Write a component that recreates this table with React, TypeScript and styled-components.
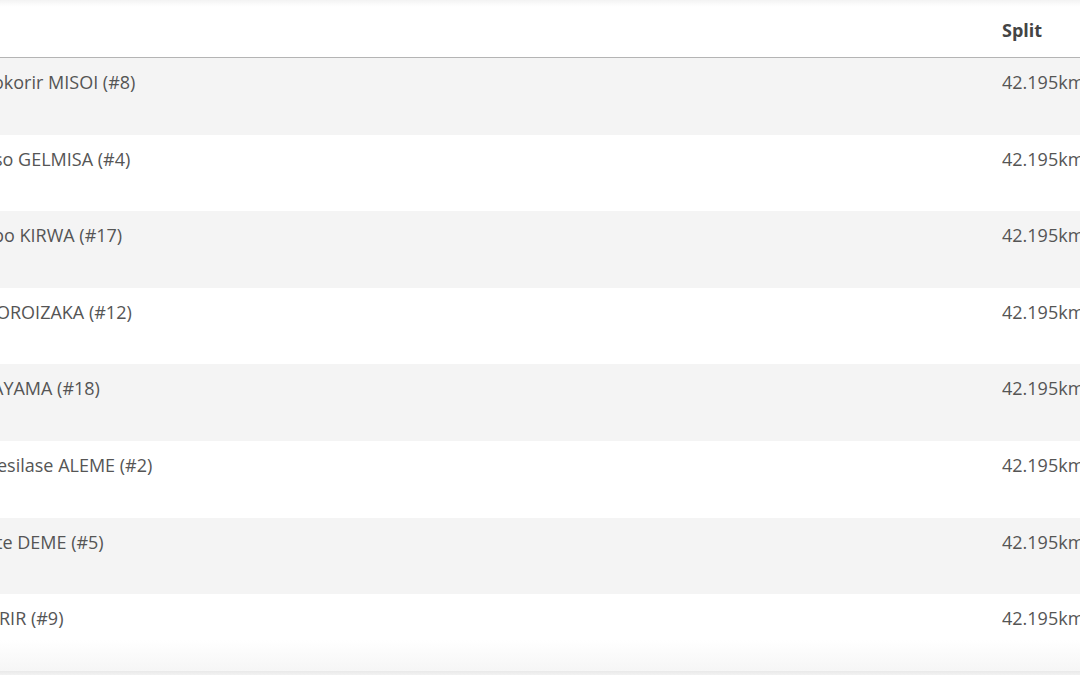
import styled, { createGlobalStyle } from "styled-components";

const GlobalStyle = createGlobalStyle`
  html, body {
    margin: 0;
    padding: 0;
    background: #fff;
    overflow: hidden;
  }
  body {
    font-family: "Open Sans", "Noto Sans", sans-serif;
    -webkit-font-smoothing: antialiased;
  }
`;

const Page = styled.div`
  width: 1080px;
  height: 675px;
  display: flex;
  flex-direction: column;
  overflow: hidden;
`;

const TopShade = styled.div`
  height: 7px;
  flex: none;
  background: linear-gradient(#f3f3f3, #fbfbfb 60%, #fff);
`;

const Grid = styled.div`
  display: grid;
  grid-template-columns: 1002px 200px;
  width: 1202px;
`;

const HeadRow = styled.div`
  display: contents;
`;

const HeadCell = styled.div`
  height: 51px;
  box-sizing: border-box;
  padding-top: 10px;
  font-size: 18px;
  line-height: 27px;
  font-weight: 700;
  color: #444;
  border-bottom: 1px solid #b4b4b4;
`;

const Row = styled.div<{ $striped: boolean; $last?: boolean }>`
  display: contents;

  & > div {
    background: ${(p) =>
      p.$last
        ? "linear-gradient(#fff 60%, #f6f6f6)"
        : p.$striped
        ? "#f4f4f4"
        : "#fff"};
  }
`;

const Cell = styled.div`
  height: 76.6px;
  box-sizing: border-box;
  padding-top: 11px;
  font-size: 18px;
  line-height: 27px;
  color: #555;
  white-space: nowrap;
  overflow: hidden;
`;

const Name = styled.span<{ $shift: number }>`
  display: inline-block;
  margin-left: ${(p) => p.$shift}px;
`;

const BottomShade = styled.div`
  flex: 1;
  background: linear-gradient(#e9e9e9, #f2f2f2);
`;

const rows = [
  { name: "okorir MISOI (#8)", shift: -7 },
  { name: "so GELMISA (#4)", shift: -6 },
  { name: "bo KIRWA (#17)", shift: -7 },
  { name: "OROIZAKA (#12)", shift: -4 },
  { name: "AYAMA (#18)", shift: -8 },
  { name: "esilase ALEME (#2)", shift: -3 },
  { name: "te DEME (#5)", shift: -4 },
  { name: "RIR (#9)", shift: -1 },
];

export default function App() {
  return (
    <Page>
      <GlobalStyle />
      <TopShade />
      <Grid>
        <HeadRow>
          <HeadCell />
          <HeadCell>Split</HeadCell>
        </HeadRow>
        {rows.map((r, i) => (
          <Row key={i} $striped={i % 2 === 0} $last={i === rows.length - 1}>
            <Cell>
              <Name $shift={r.shift}>{r.name}</Name>
            </Cell>
            <Cell>42.195km</Cell>
          </Row>
        ))}
      </Grid>
      <BottomShade />
    </Page>
  );
}
